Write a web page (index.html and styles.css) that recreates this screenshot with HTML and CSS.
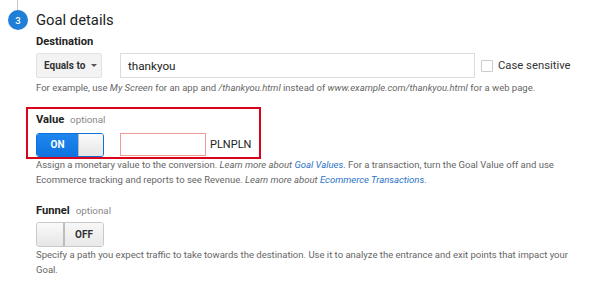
FILE: index.html
```html
<!DOCTYPE html>
<html>
<head>
<meta charset="utf-8">
<link rel="stylesheet" href="styles.css">
</head>
<body>
<div class="page">
  <div class="rail"></div>
  <div class="header">
    <div class="step">3</div>
    <div class="title">Goal details</div>
  </div>
  <div class="content">
    <div class="label">Destination</div>
    <div class="dest-row">
      <div class="dropdown">Equals to <span class="caret"></span></div>
      <div class="text-input">thankyou</div>
      <div class="check"><span class="box"></span>Case sensitive</div>
    </div>
    <div class="hint">For example, use <i>My Screen</i> for an app and <i>/thankyou.html</i> instead of <i>www.example.com/thankyou.html</i> for a web page.</div>

    <div class="highlight">
      <div class="label">Value <span class="opt">optional</span></div>
      <div class="value-row">
        <div class="toggle on"><span class="tog-on">ON</span><span class="knob"></span></div>
        <div class="val-input"></div>
        <div class="currency">PLNPLN</div>
      </div>
    </div>
    <div class="hint desc value-desc">Assign a monetary value to the conversion. <i>Learn more about <a>Goal Values</a></i>. For a transaction, turn the Goal Value off and use Ecommerce tracking and reports to see Revenue. <i>Learn more about <a>Ecommerce Transactions</a></i>.</div>

    <div class="funnel">
      <div class="label">Funnel <span class="opt">optional</span></div>
      <div class="toggle off"><span class="knob"></span><span class="tog-off">OFF</span></div>
      <div class="hint desc">Specify a path you expect traffic to take towards the destination. Use it to analyze the entrance and exit points that impact your Goal.</div>
    </div>
  </div>
</div>
</body>
</html>
```
FILE: styles.css
```css
* { box-sizing: border-box; }
html, body { margin: 0; padding: 0; background: #fff; }
body { font-family: Roboto, "Liberation Sans", Arial, sans-serif; color: #333; width: 602px; height: 287px; overflow: hidden; }
.page { padding-left: 8px; }
.rail { width: 1px; height: 10px; background: #c8c8c8; margin-left: 9px; }
.header { display: flex; align-items: center; height: 20px; }
.step { width: 20px; height: 20px; border-radius: 50%; background: #1f7ed6; color: #fff; font-size: 9.5px; font-weight: 500; display: flex; align-items: center; justify-content: center; }
.title { margin-left: 8px; font-size: 14.8px; color: #222; line-height: 20px; }
.content { padding-left: 28px; padding-top: 5px; }
.label { font-size: 11.2px; font-weight: bold; color: #222; line-height: 14px; }
.opt { font-weight: normal; color: #888; font-size: 9.8px; margin-left: 3px; }
.dest-row { display: flex; align-items: center; margin-top: 4px; height: 25px; }
.dropdown { width: 66px; height: 25px; background: #f3f3f3; border: 1px solid #e2e2e2; border-radius: 2px; font-size: 10px; font-weight: bold; color: #333; display: flex; align-items: center; padding-left: 7px; white-space: nowrap; }
.caret { width: 0; height: 0; border-left: 3px solid transparent; border-right: 3px solid transparent; border-top: 3.5px solid #555; margin-left: 6px; }
.text-input { width: 355px; height: 25px; margin-left: 18px; border: 1px solid #dcdcdc; font-size: 11.7px; color: #222; display: flex; align-items: center; padding-left: 7px; }
.check { display: flex; align-items: center; margin-left: 6px; font-size: 11.3px; color: #333; }
.box { width: 12px; height: 12px; border: 1px solid #ccc; border-radius: 1px; margin-right: 5px; }
.hint { font-size: 9.5px; color: #666; line-height: 15px; margin-top: 2px; white-space: nowrap; }
.hint a { color: #2a72c5; }
.highlight { margin-left: -10px; margin-top: 12px; width: 235px; height: 52px; border: 2.5px solid #d9041b; padding: 3.5px 0 0 8px; }
.value-row { display: flex; align-items: center; margin-top: 6px; }
.toggle { display: flex; width: 68px; height: 24px; border-radius: 3px; border: 1px solid #c9c9c9; overflow: hidden; font-size: 10px; font-weight: bold; }
.toggle.on { border-color: #0c72d6; }
.tog-on { width: 41px; background: linear-gradient(#1f86f0, #0e73de); color: #fff; display: flex; align-items: center; justify-content: center; }
.toggle .knob { flex: 1; background: linear-gradient(#fafafa, #e6e6e6); border-left: 1px solid #bcbcbc; }
.toggle.off .knob { flex: 0 0 28px; border-left: none; border-right: 2px solid #bdbdbd; }
.tog-off { flex: 1; background: linear-gradient(#f7f7f7, #e9e9e9); color: #333; display: flex; align-items: center; justify-content: center; }
.val-input { width: 86px; height: 23px; margin-left: 16px; border: 1px solid #f09a9a; }
.currency { margin-left: 4px; font-size: 11px; color: #222; }
.desc { margin-top: 0; width: 545px; white-space: normal; }
.value-desc { margin-top: -2px; }
.funnel { margin-top: 17px; }
.funnel .toggle { margin-top: 4px; height: 25px; }
```
